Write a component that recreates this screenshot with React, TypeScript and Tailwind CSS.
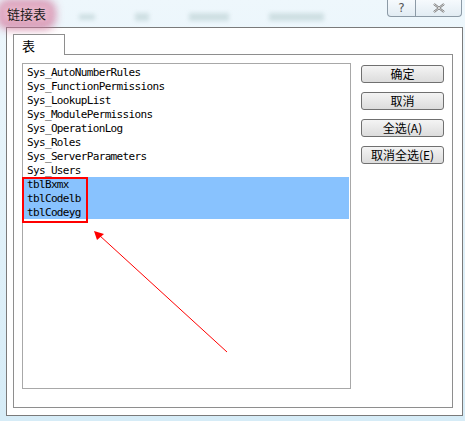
import React from "react";

const items = [
  "Sys_AutoNumberRules",
  "Sys_FunctionPermissions",
  "Sys_LookupList",
  "Sys_ModulePermissions",
  "Sys_OperationLog",
  "Sys_Roles",
  "Sys_ServerParameters",
  "Sys_Users",
  "tblBxmx",
  "tblCodelb",
  "tblCodeyg",
];

const cjk = { fontFamily: '"Noto Sans CJK SC", "Liberation Sans", sans-serif' };
const mono = { fontFamily: '"DejaVu Sans Mono", "Liberation Mono", monospace' };

function Btn({ label }: { label: string }) {
  return (
    <div
      className="w-[83px] h-[18px] flex items-center justify-center rounded-[3px] border border-[#707070] bg-gradient-to-b from-[#f4f4f4] to-[#dcdcdc] text-[12px] leading-none text-black"
      style={cjk}
    >
      {label}
    </div>
  );
}

export default function App() {
  return (
    <div className="relative w-[465px] h-[421px] overflow-hidden bg-gradient-to-b from-[#eef7fc] to-[#d6ecf7]">
      {/* title bar */}
      <div className="h-[27px] flex items-start justify-between">
        <div className="ml-[2px] mt-[4px] h-[19px] flex items-center">
          <div className="relative px-[5px] h-[19px] flex items-center">
            <div className="absolute -left-[4px] -right-[4px] -top-[4px] -bottom-[6px] rounded-[10px] bg-[#c9668f] opacity-75 blur-[5px]" />
            <div className="absolute left-0 right-0 top-0 bottom-0 rounded-[6px] bg-[#ecc0d2] opacity-80 blur-[3px]" />
            <span className="relative text-[13px] leading-none text-[#1a1a1a]" style={cjk}>
              链接表
            </span>
          </div>
          <div className="ml-[28px] mt-[6px] flex items-center gap-[40px] opacity-30 blur-[2px]">
            <div className="w-[16px] h-[6px] bg-[#8aa]" />
            <div className="w-[14px] h-[8px] bg-[#8aa]" />
            <div className="w-[40px] h-[8px] bg-[#8aa]" />
            <div className="w-[55px] h-[8px] bg-[#8aa]" />
          </div>
        </div>
        <div className="mr-[3px] flex h-[17px] w-[75px] rounded-b-[4px] border border-t-0 border-[#8c9aa6] bg-gradient-to-b from-[#f6fafd] to-[#e2ecf3] overflow-hidden">
          <div className="w-[28px] flex items-center justify-center border-r border-[#8c9aa6] text-[12px] text-[#555] leading-none" style={{ fontFamily: '"DejaVu Sans", sans-serif' }}>
            ?
          </div>
          <div className="flex-1 flex items-center justify-center">
            <svg width="14" height="10" viewBox="0 0 14 10">
              <path d="M2 1 L12 9 M12 1 L2 9" stroke="#666" strokeWidth="2.2" fill="none" />
              <path d="M2 1 L12 9 M12 1 L2 9" stroke="#fff" strokeWidth="0.8" fill="none" />
            </svg>
          </div>
        </div>
      </div>

      {/* main panel */}
      <div className="ml-[6px] w-[457px] h-[389px] border border-[#7a7a7a] bg-white pl-[6px] pt-[6px]">
        <div
          className="relative z-10 w-[52px] h-[21px] border border-b-0 border-[#8e8e8e] bg-white pl-[8px] pt-[4px] text-[13px] leading-none text-black"
          style={cjk}
        >
          表
        </div>
        <div className="-mt-px w-[440px] h-[354px] border border-[#8e8e8e] bg-white flex items-start pl-[8px] pt-[8px]">
          <div className="w-[329px] h-[326px] border border-[#a8a8a8] bg-white pt-[1px] px-[1px]">
            {items.map((it, i) => (
              <div
                key={it}
                className={`h-[14px] pl-[3px] pt-[1px] text-[11px] leading-[14px] tracking-[-0.65px] text-black whitespace-pre ${i >= 8 ? "bg-[#88c2fe]" : ""}`}
                style={mono}
              >
                {it}
              </div>
            ))}
          </div>
          <div className="ml-[10px] mt-[2px] flex flex-col gap-[9px]">
            <Btn label="确定" />
            <Btn label="取消" />
            <Btn label="全选(A)" />
            <Btn label="取消全选(E)" />
          </div>
        </div>
      </div>

      {/* annotations */}
      <div className="absolute left-[22px] top-[177px] w-[66px] h-[46px] border-2 border-[#ff0000]" />
      <svg className="absolute left-0 top-0" width="465" height="421">
        <line x1="227" y1="352" x2="99" y2="235" stroke="#ff0000" strokeWidth="1" />
        <polygon points="94,231 104,234 97,240" fill="#ff0000" />
      </svg>
    </div>
  );
}
